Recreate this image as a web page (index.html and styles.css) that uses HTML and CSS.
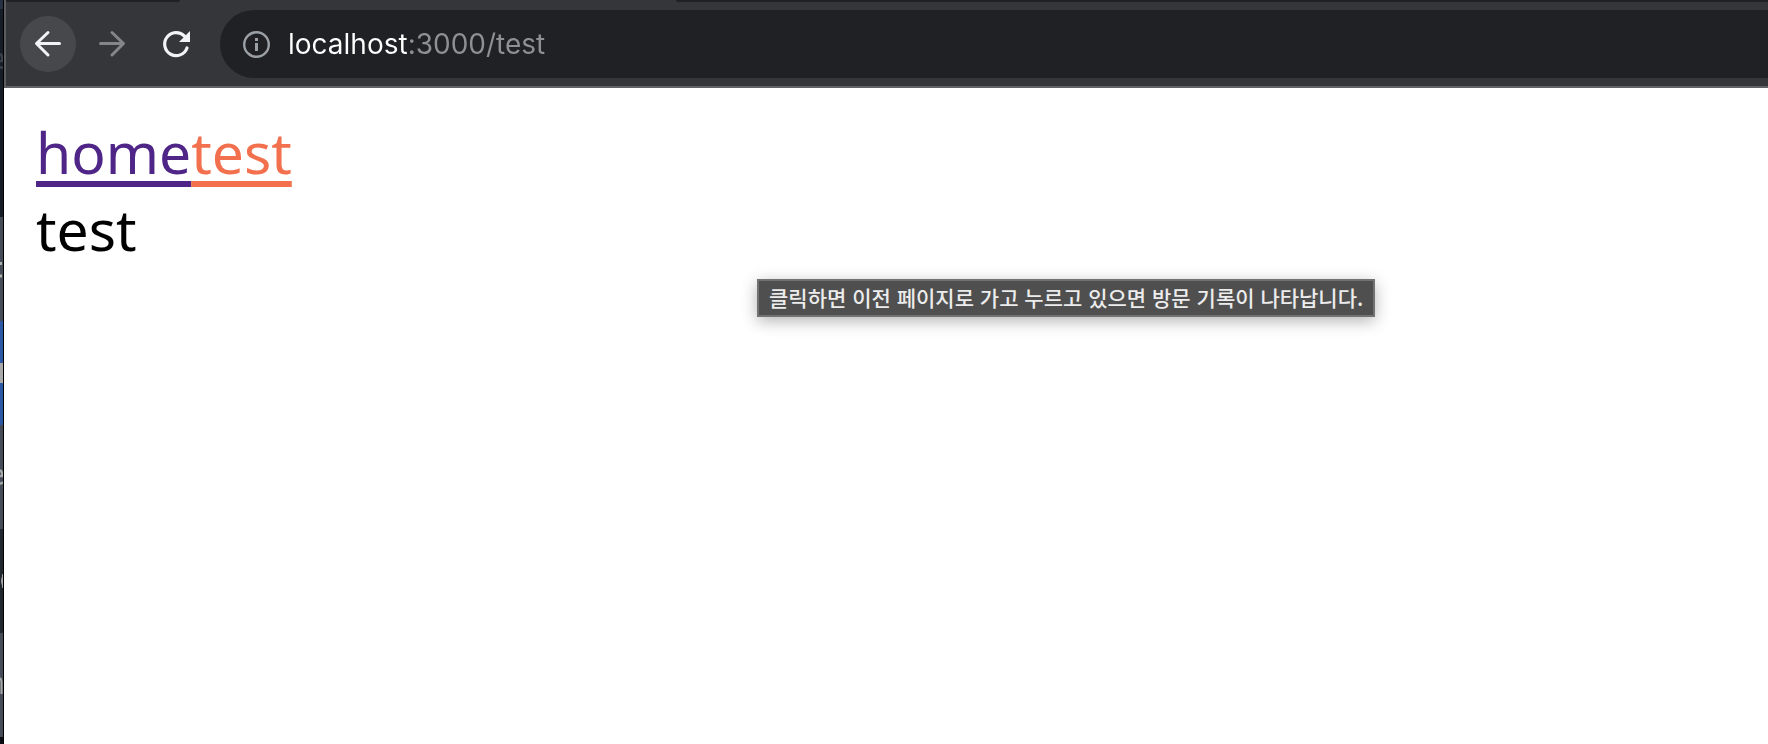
FILE: index.html
```html
<!DOCTYPE html>
<html lang="ko">
<head>
    <meta charset="UTF-8">
    <meta name="viewport" content="width=device-width, initial-scale=1.0">
    <title>test</title>
    <link rel="stylesheet" href="styles.css">
</head>
<body>
    <!-- editor window behind the browser -->
    <aside class="editor" aria-hidden="true">
        <div class="top"></div>
        <div class="row dim">
            <svg viewBox="0 0 3 18"><path d="M0 2Q2.500 3 2.500 9H0M0 15.500H3" fill="none" stroke="#3b424c" stroke-width="2.500"/></svg>
        </div>
        <div class="row dim"></div>
        <div class="row light">
            <svg viewBox="0 0 3 18"><path d="M0 3.500H2M0 16H2" stroke="#b0b1ad" stroke-width="3"/></svg>
        </div>
        <div class="row selected"></div>
        <div class="row cursor"></div>
        <div class="row selected"></div>
        <div class="row light">
            <svg viewBox="0 0 3 18"><path d="M0 2Q2.500 4 2.500 8H0M0 15.500Q2 15.500 3 14" fill="none" stroke="#a5a7a8" stroke-width="2.500"/></svg>
        </div>
        <div class="row dark">
            <svg viewBox="0 0 3 18"><path d="M3 2Q0 9 3 16Z" fill="#a5a7a8" stroke="#a5a7a8"/></svg>
        </div>
        <div class="row light">
            <svg viewBox="0 0 3 18"><path d="M0 2Q1.500 3 1.500 7V18" fill="none" stroke="#a5a7a8" stroke-width="2"/></svg>
        </div>
        <div class="row bottom"></div>
    </aside>

    <div class="browser">
        <header class="chrome">
            <div class="tabs">
                <span class="tab-left"></span>
                <span class="tab-right"></span>
            </div>
            <form class="toolbar">
                <button type="button" class="nav-button hovered" aria-label="뒤로">
                    <svg viewBox="0 0 56 56" fill="none" stroke="#f1f3f4" stroke-width="3" stroke-linecap="round">
                        <path d="M39.500 27.500H17M28 16.500L16.500 27.500L28 39" stroke-linejoin="round"/>
                    </svg>
                </button>
                <button type="button" class="nav-button" aria-label="앞으로">
                    <svg viewBox="0 0 56 56" fill="none" stroke="#858689" stroke-width="3" stroke-linecap="round">
                        <path d="M16.500 27.500H39M28 16.500L39.500 27.500L28 39" stroke-linejoin="round"/>
                    </svg>
                </button>
                <button type="button" class="nav-button" aria-label="새로고침">
                    <svg viewBox="0 0 56 56" fill="none">
                        <path d="M39 32A11.500 11.500 0 1 1 36.500 20.200" stroke="#f1f3f4" stroke-width="3.200" stroke-linecap="round"/>
                        <path d="M42 15V26H31Z" fill="#f1f3f4"/>
                    </svg>
                </button>
                <div class="address">
                    <button type="button" class="info" aria-label="사이트 정보">
                        <svg viewBox="0 0 28 28" fill="none">
                            <circle cx="14.500" cy="14.500" r="12.300" stroke="#9aa0a6" stroke-width="2.400"/>
                            <path d="M13 8h3v3h-3zM13 13h3v8h-3z" fill="#9aa0a6"/>
                        </svg>
                    </button>
                    <input type="text" class="url" value="localhost:3000/test" aria-label="주소" spellcheck="false">
                </div>
            </form>
        </header>

        <main class="page">
            <nav><a class="home" href="/">home</a><a class="active" href="/test">test</a></nav>
            <div>test</div>
        </main>
    </div>

    <div class="tooltip" role="tooltip">클릭하면 이전 페이지로 가고 누르고 있으면 방문 기록이 나타납니다.</div>
</body>
</html>
```

FILE: styles.css
```css
* {
    box-sizing: border-box;
}
body {
    margin: 0;
    display: flex;
    height: 100vh;
    overflow: hidden;
    background: #ffffff;
    color: #000000;
    font-family: "Noto Sans", "Noto Sans CJK KR", sans-serif;
}
.editor {
    flex: none;
    width: 4px;
    display: flex;
    flex-direction: column;
    overflow: hidden;
    background: #0d1117;
    border-right: 1px solid #000000;
}
.top {
    flex: none;
    height: 9px;
    background: #263243;
}
.row {
    flex: none;
    height: 104px;
    display: flex;
    align-items: center;
}
.row svg {
    width: 3px;
    height: 18px;
}
.dim {
    background: #171d26;
}
.light {
    background: #454c57;
}
.dark {
    background: #20272f;
}
.selected {
    height: 42px;
    background: #2c59a5;
}
.cursor {
    height: 20px;
    background: #a9a9a9;
}
.bottom {
    background: #0a0d12;
}

.browser {
    flex: 1;
    min-width: 0;
    display: flex;
    flex-direction: column;
}
.chrome {
    background: #35363a;
    border-left: 2px solid #5c5d60;
    border-bottom: 2px solid #616166;
}
.tabs {
    display: flex;
    justify-content: space-between;
    height: 2px;
}
.tab-left {
    width: 174px;
    background: #202124;
    border-bottom-right-radius: 8px;
}
.tab-right {
    flex: 1;
    margin-left: 496px;
    background: #202124;
    border-bottom-left-radius: 8px;
}
.toolbar {
    display: flex;
    align-items: center;
    gap: 8px;
    margin: 0;
    padding: 8px 0 8px 14px;
}
.nav-button {
    flex: none;
    width: 56px;
    height: 56px;
    padding: 0;
    border: none;
    border-radius: 50%;
    background: none;
}
.nav-button svg,
.info svg {
    display: block;
    width: 100%;
}
.hovered {
    background: #47484b;
}
.address {
    flex: 1;
    display: flex;
    align-items: center;
    gap: 18px;
    height: 68px;
    margin-left: 8px;
    padding-left: 22px;
    background: #202124;
    border-radius: 34px 0 0 34px;
}
.info {
    flex: none;
    width: 28px;
    padding: 0;
    border: none;
    background: none;
}
.url {
    flex: 1;
    min-width: 0;
    height: 40px;
    padding: 0;
    border: none;
    outline: none;
    /* host is white, port and path are grey */
    background: linear-gradient(to right, #ffffff 120px, #8f9092 120px);
    -webkit-background-clip: text;
    background-clip: text;
    color: transparent;
    caret-color: #ffffff;
    font-family: Inter, sans-serif;
    font-size: 28px;
}

.page {
    flex: 1;
    padding: 26px 32px;
    font-size: 57px;
    line-height: 77px;
}
.page a {
    text-decoration: underline;
    text-decoration-thickness: 6px;
    text-underline-offset: 7px;
    text-decoration-skip-ink: none;
}
.home {
    color: #4f2587;
}
.active {
    color: #f3704f;
}

.tooltip {
    position: absolute;
    top: 279px;
    left: 757px;
    padding: 0 10px 2px;
    background: #4f4f4f;
    border: 2px solid #727272;
    box-shadow: 0 4px 16px rgba(0, 0, 0, 0.3);
    color: #ececec;
    font-family: "Noto Sans CJK KR", sans-serif;
    font-size: 21px;
    font-weight: 500;
    line-height: 32px;
    white-space: nowrap;
}
```
